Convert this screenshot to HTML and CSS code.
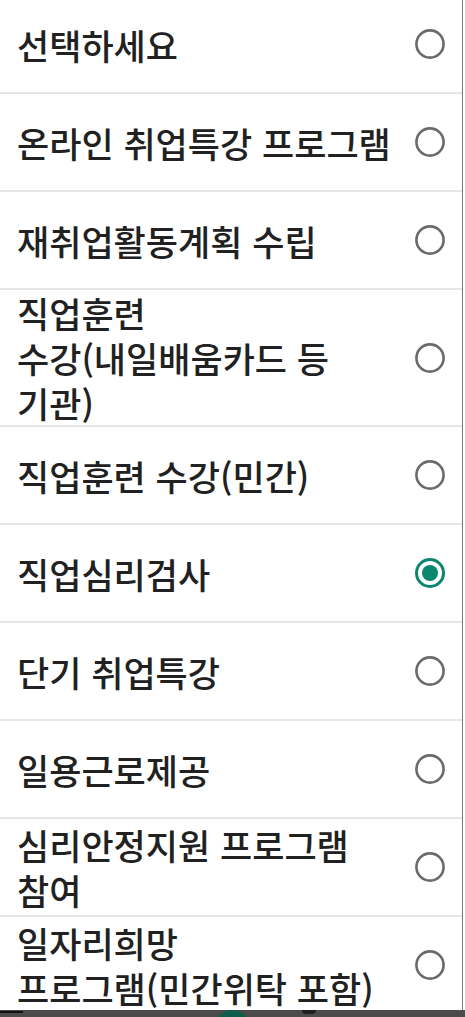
FILE: index.html
```html
<!DOCTYPE html>
<html lang="ko">
<head>
<meta charset="utf-8">
<title>선택</title>
<link rel="stylesheet" href="styles.css">
</head>
<body>
<div class="dialog">
  <ul class="list">
    <li class="item"><span class="label">선택하세요</span><svg class="radio" viewBox="0 0 30 30"><circle cx="15" cy="15" r="13.6" class="ring"/></svg></li>
    <li class="item"><span class="label">온라인 취업특강 프로그램</span><svg class="radio" viewBox="0 0 30 30"><circle cx="15" cy="15" r="13.6" class="ring"/></svg></li>
    <li class="item"><span class="label">재취업활동계획 수립</span><svg class="radio" viewBox="0 0 30 30"><circle cx="15" cy="15" r="13.6" class="ring"/></svg></li>
    <li class="item"><span class="label">직업훈련 <span class="word">수강(내일배움카드</span> 등 기관)</span><svg class="radio" viewBox="0 0 30 30"><circle cx="15" cy="15" r="13.6" class="ring"/></svg></li>
    <li class="item"><span class="label">직업훈련 <span class="word">수강(민간)</span></span><svg class="radio" viewBox="0 0 30 30"><circle cx="15" cy="15" r="13.6" class="ring"/></svg></li>
    <li class="item"><span class="label">직업심리검사</span><svg class="radio checked" viewBox="0 0 30 30"><circle cx="15" cy="15" r="13.5" class="ring"/><circle cx="15" cy="15" r="8" class="dot"/></svg></li>
    <li class="item"><span class="label">단기 취업특강</span><svg class="radio" viewBox="0 0 30 30"><circle cx="15" cy="15" r="13.6" class="ring"/></svg></li>
    <li class="item"><span class="label">일용근로제공</span><svg class="radio" viewBox="0 0 30 30"><circle cx="15" cy="15" r="13.6" class="ring"/></svg></li>
    <li class="item"><span class="label">심리안정지원 프로그램 참여</span><svg class="radio" viewBox="0 0 30 30"><circle cx="15" cy="15" r="13.6" class="ring"/></svg></li>
    <li class="item"><span class="label">일자리희망 <span class="word">프로그램(민간위탁</span> 포함)</span><svg class="radio" viewBox="0 0 30 30"><circle cx="15" cy="15" r="13.6" class="ring"/></svg></li>
  </ul>
</div>
<div class="backdrop">
  <span class="bar-line"></span>
  <span class="fab"></span>
  <span class="blob"></span>
</div>
</body>
</html>
```
FILE: styles.css
```css
html, body {
  margin: 0;
  padding: 0;
  background: #ffffff;
}
body {
  width: 465px;
  height: 1017px;
  overflow: hidden;
  font-family: "Noto Sans CJK KR", "Noto Sans", sans-serif;
}
.dialog {
  width: 462px;
  height: 1010px;
  border-right: 1px solid #7a7a7a;
  overflow: hidden;
  background: #ffffff;
}
.list {
  list-style: none;
  margin: -4px 0 0 0;
  padding: 0;
}
.item {
  display: flex;
  align-items: center;
  min-height: 96px;
  padding: 0 17px;
  border-bottom: 2px solid #e6e6e6;
  gap: 12px;
}
.label {
  flex: 1;
  font-size: 35px;
  line-height: 45px;
  font-weight: 500;
  color: #212121;
  word-break: keep-all;
}
.word {
  white-space: nowrap;
}
.radio {
  width: 30px;
  height: 30px;
  flex: none;
}
.ring {
  fill: none;
  stroke: #6a6a6a;
  stroke-width: 2.6;
}
.checked .ring {
  stroke: #0b8770;
  stroke-width: 3;
}
.dot {
  fill: #0b8770;
}
.backdrop {
  display: flex;
  align-items: flex-start;
  height: 7px;
  background: #4b4b4b;
}
.bar-line {
  width: 23px;
  height: 2px;
  margin-top: 1px;
  background: #111;
}
.fab {
  width: 35px;
  height: 35px;
  margin-left: 192px;
  border-radius: 50%;
  background: #0d5c4b;
}
.blob {
  width: 14px;
  height: 4px;
  margin-left: 52px;
  border-radius: 0 0 7px 7px;
  background: #1e1e1e;
}
```
